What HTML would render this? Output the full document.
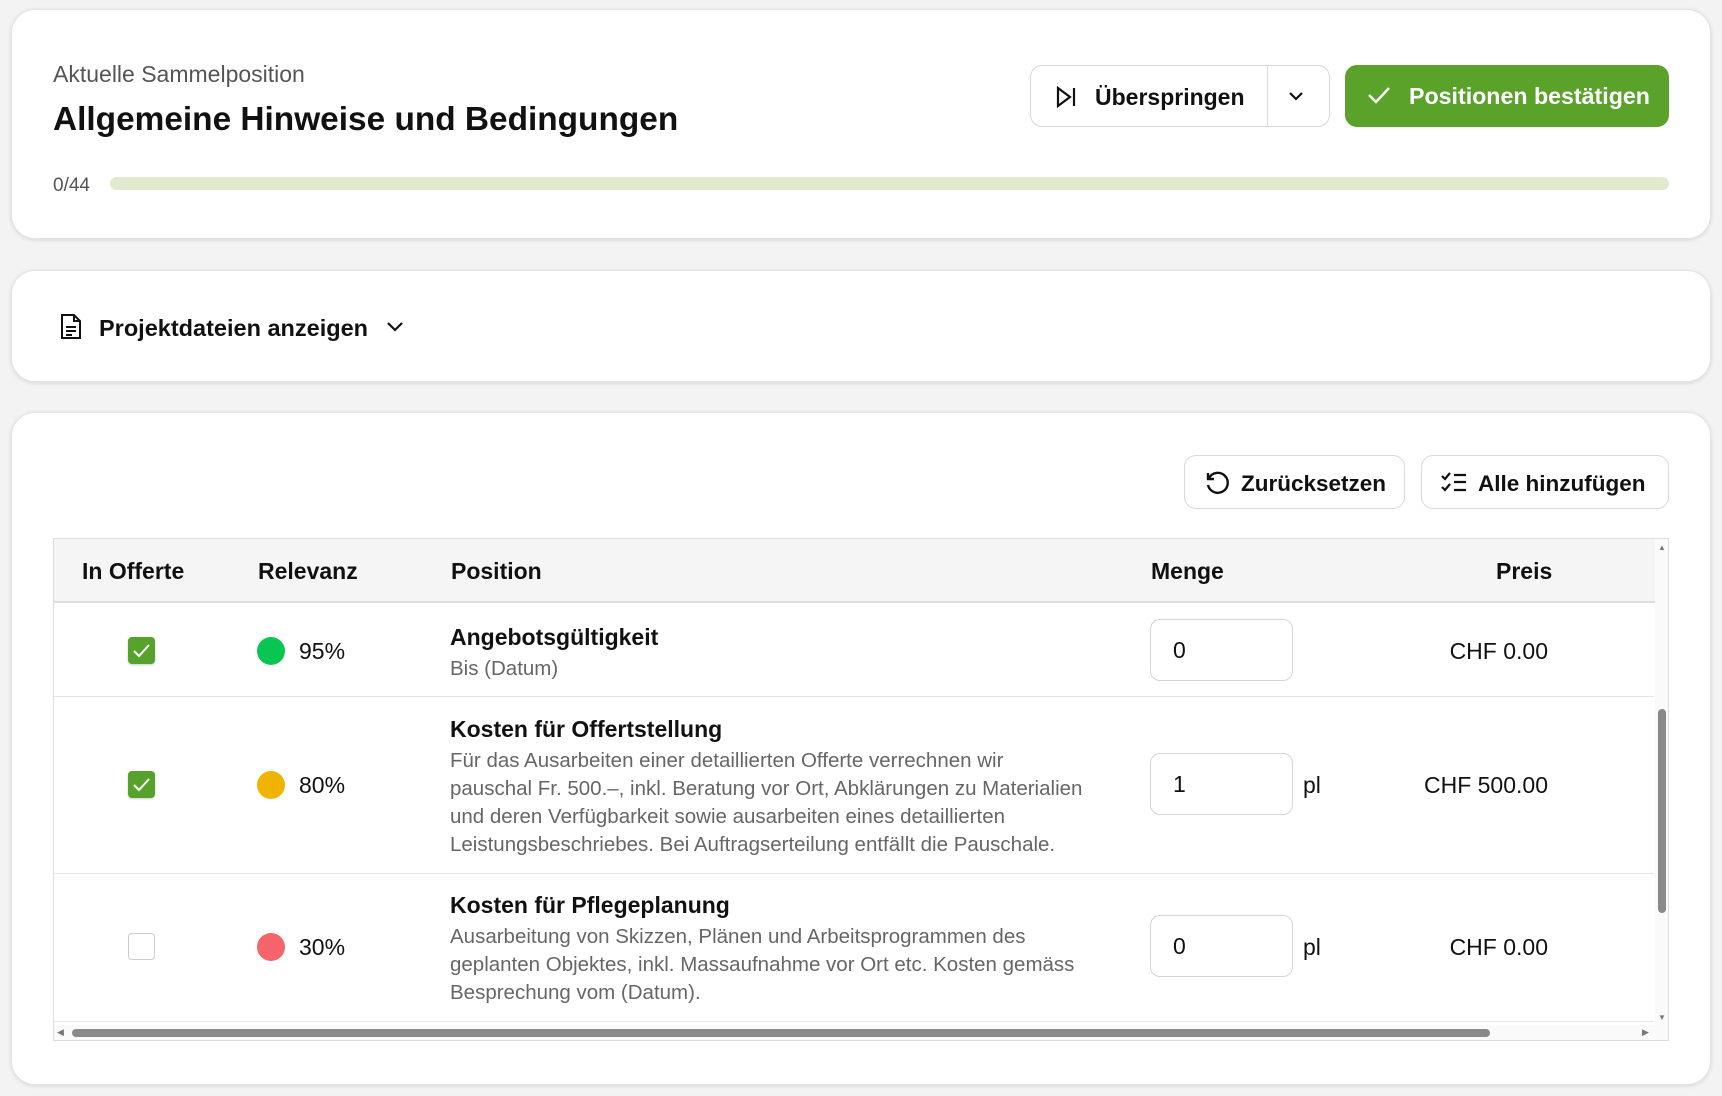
<!DOCTYPE html>
<html><head><meta charset="utf-8"><style>
*{box-sizing:border-box;margin:0;padding:0}
body{width:1722px;height:1096px;background:#f3f3f3;font-family:"Liberation Sans",sans-serif;color:#111;position:relative;overflow:hidden}
.card{position:absolute;left:11px;width:1700px;background:#fff;border-radius:24px;box-shadow:0 1px 4px rgba(0,0,0,.12);border:1px solid #e4e4e4}
.abs{position:absolute}
.btn{position:absolute;border:1px solid #d8d8de;border-radius:12px;background:#fff;display:flex;align-items:center;font-size:23px;font-weight:bold;color:#111}
.th{position:absolute;top:19px;font-size:23px;font-weight:bold}
.cb{position:absolute;left:128px;width:27px;height:27px;border-radius:4px;background:#57a22c;box-shadow:0 1px 2px rgba(0,0,0,.2)}
.cb.off{background:#fff;border:1px solid #ccc;box-shadow:none}
.dot{position:absolute;left:257px;width:28px;height:28px;border-radius:50%}
.pct{position:absolute;left:299px;font-size:23px}
.tt{position:absolute;left:450px;font-size:23px;font-weight:bold}
.ds{position:absolute;left:450px;font-size:20.5px;line-height:28px;color:#666}
.inp{position:absolute;left:1150px;width:143px;height:62px;border:1px solid #d6d6d6;border-radius:10px;font-size:23px;padding-left:22px;display:flex;align-items:center}
.pl{position:absolute;left:1303px;font-size:23px}
.pr{position:absolute;right:174px;font-size:23px;text-align:right}
.hr{position:absolute;left:54px;width:1600px;height:1px;background:#e6e6e6}
</style></head><body>

<div class="card" style="top:9px;height:230px"></div>
<div class="abs" style="left:53px;top:61px;font-size:23px;color:#555">Aktuelle Sammelposition</div>
<div class="abs" style="left:53px;top:101px;font-size:33.4px;font-weight:bold">Allgemeine Hinweise und Bedingungen</div>

<div class="btn" style="left:1030px;top:65px;width:300px;height:62px">
 <svg class="abs" style="left:24px;top:20px" width="22" height="22" viewBox="0 0 22 22" fill="none" stroke="#111" stroke-width="2.2"><path d="M3 2 L15 11 L3 20 Z"/><path d="M19 2 V20"/></svg>
 <span class="abs" style="left:64px;top:18px">Überspringen</span>
 <div class="abs" style="left:236px;top:0;width:1px;height:60px;background:#d8d8de"></div>
 <svg class="abs" style="left:256px;top:21px" width="18" height="18" viewBox="0 0 18 18" fill="none" stroke="#111" stroke-width="2.2"><path d="M3 6 L9 12 L15 6"/></svg>
</div>
<div class="abs" style="left:1345px;top:65px;width:324px;height:62px;background:#5aa22a;border-radius:12px;color:#fff;font-size:23.2px;font-weight:bold">
 <svg class="abs" style="left:22px;top:19px" width="24" height="22" viewBox="0 0 24 22" fill="none" stroke="#fff" stroke-width="2.4"><path d="M2 11 L9 18 L22 4"/></svg>
 <span class="abs" style="left:64px;top:18px">Positionen bestätigen</span>
</div>
<div class="abs" style="left:53px;top:175px;font-size:19px;color:#555">0/44</div>
<div class="abs" style="left:110px;top:177px;width:1559px;height:13px;border-radius:7px;background:#dfeacf"></div>

<div class="card" style="top:270px;height:112px"></div>
<svg class="abs" style="left:59px;top:313px" width="24" height="27" viewBox="0 0 24 27" fill="none" stroke="#111" stroke-width="2"><path d="M3 2 H15 L21 8 V25 H3 Z"/><path d="M15 2 V8 H21"/><path d="M7 14 H17 M7 18 H17 M7 22 H13"/></svg>
<div class="abs" style="left:99px;top:315px;font-size:23.5px;font-weight:bold">Projektdateien anzeigen</div>
<svg class="abs" style="left:385px;top:318px" width="20" height="18" viewBox="0 0 20 18" fill="none" stroke="#111" stroke-width="2.2"><path d="M3 5 L10 12 L17 5"/></svg>

<div class="card" style="top:412px;height:673px"></div>
<div class="btn" style="left:1184px;top:455px;width:221px;height:54px">
 <svg class="abs" style="left:19px;top:14px" width="26" height="26" viewBox="0 0 26 26" fill="none" stroke="#111" stroke-width="2.4"><path d="M5 8 A10 10 0 1 1 4 15"/><path d="M4 3 V9 H10"/></svg>
 <span class="abs" style="left:56px;top:15px;font-size:22.5px">Zurücksetzen</span>
</div>
<div class="btn" style="left:1421px;top:455px;width:248px;height:54px">
 <svg class="abs" style="left:19px;top:16px" width="26" height="22" viewBox="0 0 26 22" fill="none" stroke="#111" stroke-width="2.2"><path d="M1 4 L4 7 L9 1"/><path d="M1 15 L4 18 L9 12"/><path d="M13 3 H25 M13 10 H25 M13 18 H25"/></svg>
 <span class="abs" style="left:56px;top:15px;font-size:22.5px">Alle hinzufügen</span>
</div>

<div class="abs" style="left:53px;top:538px;width:1616px;height:503px;border:1px solid #ddd;overflow:hidden">
 <div class="abs" style="left:0;top:0;width:1601px;height:64px;background:#f5f5f5;border-bottom:2px solid #ddd"></div>
 <div class="th" style="left:28px">In Offerte</div>
 <div class="th" style="left:204px">Relevanz</div>
 <div class="th" style="left:397px">Position</div>
 <div class="th" style="left:1097px">Menge</div>
 <div class="th" style="left:1442px">Preis</div>
 <div class="abs" style="left:1601px;top:0;width:15px;height:486px;background:#fafafa"></div>
 <div class="abs" style="left:1604px;top:170px;width:8px;height:204px;background:#8a8a8a;border-radius:4px"></div>
 <div class="abs" style="left:1604px;top:4px;font-size:8px;color:#777">▲</div>
 <div class="abs" style="left:1604px;top:474px;font-size:8px;color:#777">▼</div>
 <div class="abs" style="left:0;top:486px;width:1616px;height:17px;background:#fafafa"></div>
 <div class="abs" style="left:18px;top:490px;width:1418px;height:8px;background:#8a8a8a;border-radius:4px"></div>
 <div class="abs" style="left:3px;top:488px;font-size:9px;color:#777">◀</div>
 <div class="abs" style="left:1588px;top:488px;font-size:9px;color:#777">▶</div>
</div>

<!-- row 1 -->
<div class="cb" style="top:637px"><svg width="27" height="27" viewBox="0 0 27 27" fill="none" stroke="#fff" stroke-width="2"><path d="M6 14 L11 19 L21 8"/></svg></div>
<div class="dot" style="top:637px;background:#09c552"></div>
<div class="pct" style="top:638px">95%</div>
<div class="tt" style="top:624px">Angebotsgültigkeit</div>
<div class="ds" style="top:655px">Bis (Datum)</div>
<div class="inp" style="top:619px">0</div>
<div class="pr" style="top:638px">CHF 0.00</div>
<div class="hr" style="top:696px"></div>

<!-- row 2 -->
<div class="cb" style="top:771px"><svg width="27" height="27" viewBox="0 0 27 27" fill="none" stroke="#fff" stroke-width="2"><path d="M6 14 L11 19 L21 8"/></svg></div>
<div class="dot" style="top:771px;background:#f0b400"></div>
<div class="pct" style="top:772px">80%</div>
<div class="tt" style="top:716px">Kosten für Offertstellung</div>
<div class="ds" style="top:747px">Für das Ausarbeiten einer detaillierten Offerte verrechnen wir<br>pauschal Fr. 500.–, inkl. Beratung vor Ort, Abklärungen zu Materialien<br>und deren Verfügbarkeit sowie ausarbeiten eines detaillierten<br>Leistungsbeschriebes. Bei Auftragserteilung entfällt die Pauschale.</div>
<div class="inp" style="top:753px">1</div>
<div class="pl" style="top:772px">pl</div>
<div class="pr" style="top:772px">CHF 500.00</div>
<div class="hr" style="top:873px"></div>

<!-- row 3 -->
<div class="cb off" style="top:933px"></div>
<div class="dot" style="top:933px;background:#f4646a"></div>
<div class="pct" style="top:934px">30%</div>
<div class="tt" style="top:892px">Kosten für Pflegeplanung</div>
<div class="ds" style="top:923px">Ausarbeitung von Skizzen, Plänen und Arbeitsprogrammen des<br>geplanten Objektes, inkl. Massaufnahme vor Ort etc. Kosten gemäss<br>Besprechung vom (Datum).</div>
<div class="inp" style="top:915px">0</div>
<div class="pl" style="top:934px">pl</div>
<div class="pr" style="top:934px">CHF 0.00</div>
<div class="hr" style="top:1021px"></div>
</body></html>
